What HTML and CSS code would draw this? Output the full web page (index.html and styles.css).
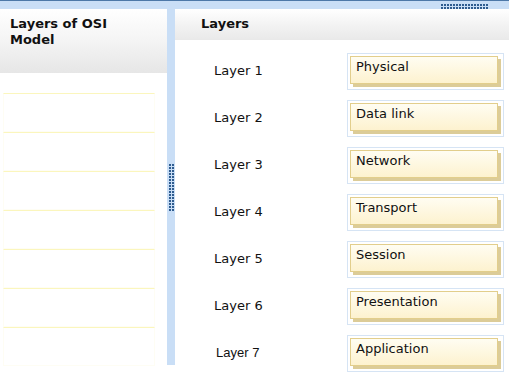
FILE: index.html
```html
<!DOCTYPE html>
<html lang="en">
<head>
    <meta charset="UTF-8">
    <title>Layers of OSI Model</title>
    <link rel="stylesheet" href="styles.css">
</head>
<body>
    <div class="top_bar">
        <span class="grip grip_h"></span>
    </div>
    <div class="main">
        <div class="left_panel">
            <div class="left_head">Layers of OSI<br>Model</div>
            <div class="drop_list">
                <div class="drop_row"></div>
                <div class="drop_row"></div>
                <div class="drop_row"></div>
                <div class="drop_row"></div>
                <div class="drop_row"></div>
                <div class="drop_row"></div>
                <div class="drop_row"></div>
            </div>
        </div>
        <div class="splitter"><span class="grip grip_v"></span></div>
        <div class="right_panel">
            <div class="right_head">Layers</div>
            <div class="layer_list">
                <div class="layer_row"><span class="label">Layer 1</span><div class="slot"><div class="card">Physical</div></div></div>
                <div class="layer_row"><span class="label">Layer 2</span><div class="slot"><div class="card">Data link</div></div></div>
                <div class="layer_row"><span class="label">Layer 3</span><div class="slot"><div class="card">Network</div></div></div>
                <div class="layer_row"><span class="label">Layer 4</span><div class="slot"><div class="card">Transport</div></div></div>
                <div class="layer_row"><span class="label">Layer 5</span><div class="slot"><div class="card">Session</div></div></div>
                <div class="layer_row"><span class="label">Layer 6</span><div class="slot"><div class="card">Presentation</div></div></div>
                <div class="layer_row"><span class="label label_alt">Layer 7</span><div class="slot"><div class="card">Application</div></div></div>
            </div>
        </div>
    </div>
</body>
</html>
```

FILE: styles.css
```css
*{
    margin: 0;
    padding: 0;
    box-sizing: border-box;
}
body{
    width: 509px;
    height: 373px;
    overflow: hidden;
    background: #fff;
    font-family: "DejaVu Sans", Verdana, sans-serif;
    font-size: 13px;
    color: #111;
}
.top_bar{
    height: 9px;
    background: #c9def6;
    border-top: 1px solid #4d78a8;
    display: flex;
    justify-content: flex-end;
    padding: 3px 20px 0 0;
}
/* dotted grip: 2px squares on a 3px grid */
.grip{
    background:
        repeating-linear-gradient(90deg, transparent 0 2px, #c9def6 2px 3px),
        repeating-linear-gradient(0deg, transparent 0 2px, #c9def6 2px 3px),
        #2f5c8f;
}
.grip_h{
    width: 48px;
    height: 5px;
}
.grip_v{
    width: 5px;
    height: 48px;
}
.main{
    display: flex;
    height: 356px;
}
.left_panel{
    width: 167px;
}
.left_head{
    height: 64px;
    padding: 7px 0 0 10px;
    font-weight: bold;
    line-height: 16px;
    background: linear-gradient(#ffffff, #f4f4f4 50%, #e6e6e6);
}
.drop_list{
    padding: 20px 12px 0 3px;
}
.drop_row{
    height: 39px;
    border: 1px solid #fefdf4;
    border-top-color: #fbf6bd;
}
.splitter{
    width: 8px;
    background: #c9def6;
    display: flex;
    justify-content: center;
    padding-top: 154px;
}
.right_panel{
    flex: 1;
}
.right_head{
    height: 31px;
    padding: 7px 0 0 26px;
    font-weight: bold;
    background: linear-gradient(#ffffff, #f3f3f3 50%, #e9e9e9);
}
.layer_list{
    padding: 13px 0 0 39px;
    display: flex;
    flex-direction: column;
    gap: 10px;
}
.layer_row{
    display: flex;
    align-items: center;
}
.label{
    width: 133px;
    padding-bottom: 3px;
}
.label_alt{
    font-family: "Liberation Sans", Arial, sans-serif;
    padding-left: 2px;
}
.slot{
    width: 157px;
    height: 37px;
    border: 1px solid #d6e4f4;
    padding: 2px;
}
.card{
    width: calc(100% - 3px);
    height: calc(100% - 3px);
    border: 1px solid #e2ce8c;
    background: linear-gradient(#fffdf2, #fdf2cf);
    box-shadow: 3px 3px 0 #dccc98;
    padding: 2px 0 0 5px;
    line-height: 16px;
}
```
